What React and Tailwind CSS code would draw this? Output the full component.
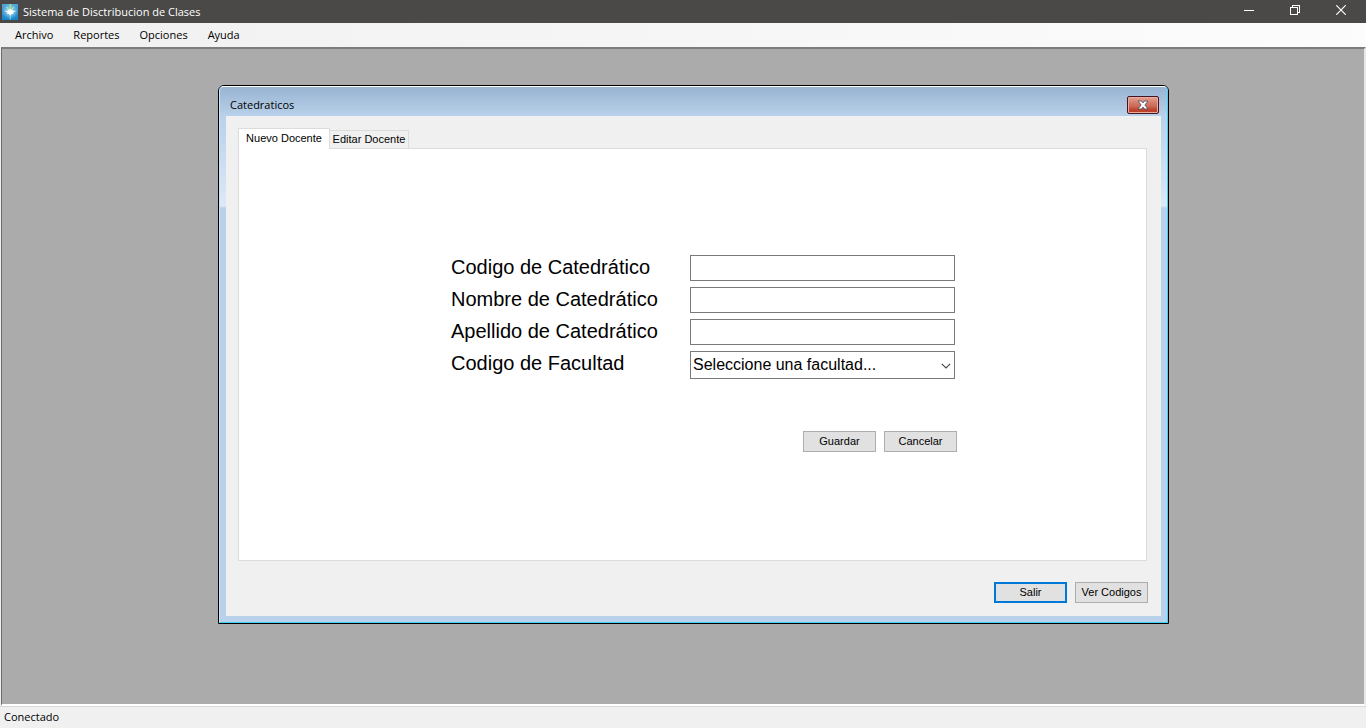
import React, { useState } from "react";

const menuItems = ["Archivo", "Reportes", "Opciones", "Ayuda"];

const fields = [
  { id: "codigo", label: "Codigo de Catedrático" },
  { id: "nombre", label: "Nombre de Catedrático" },
  { id: "apellido", label: "Apellido de Catedrático" },
];

function AppIcon() {
  return (
    <svg width="16" height="16" viewBox="0 0 16 16" aria-hidden="true">
      <defs>
        <linearGradient id="appBg" x1="0" y1="0" x2="0" y2="1">
          <stop offset="0" stopColor="#4fa6d8" />
          <stop offset="1" stopColor="#1583cc" />
        </linearGradient>
        <radialGradient id="appGlow" cx=".5" cy=".45" r=".5">
          <stop offset="0" stopColor="#b4e6f8" />
          <stop offset="1" stopColor="#b4e6f8" stopOpacity="0" />
        </radialGradient>
      </defs>
      <rect width="16" height="16" fill="url(#appBg)" />
      <rect width="16" height="16" fill="url(#appGlow)" />
      <path d="M7.500 0h1.500v6h-1.500z" fill="#a8dc84" />
      <path d="M5 3l2 3M11.500 3l-2 3" stroke="#c4ea9c" />
      <path d="M2.500 7l3.500-.5 2.200-1.500 2.300 1.500 3.500.5-3 1.500.5 1.500h-2l-1.300 2-1.200-2H5l.5-1.500z" fill="#fff" />
      <path d="M7.700 12h1v3.500h-1z" fill="#8fdcc8" />
    </svg>
  );
}

function PushButton({ children, focused = false }) {
  return (
    <button
      type="button"
      className={
        "flex h-[21px] w-[73px] items-center justify-center bg-[#e1e1e1] text-[11px] leading-none whitespace-nowrap text-black " +
        (focused ? "border-2 border-[#0078d7]" : "border border-[#adadad]")
      }
    >
      {children}
    </button>
  );
}

function TitleBar() {
  return (
    <header className="flex h-[23px] shrink-0 items-center justify-between bg-[#4a4947] pr-0.5 pl-0.5 text-white">
      <div className="flex items-center gap-[5px]">
        <AppIcon />
        <h1 className="text-[11px] leading-4">Sistema de Disctribucion de Clases</h1>
      </div>
      <div className="flex h-full">
        <button type="button" aria-label="Minimizar" className="flex w-[46px] items-center justify-center pb-[3px]">
          <svg width="10" height="10" viewBox="0 0 10 10" shapeRendering="crispEdges">
            <path d="M0 5.5h10" stroke="#fff" />
          </svg>
        </button>
        <button type="button" aria-label="Restaurar" className="flex w-[46px] items-center justify-center pb-[3px]">
          <svg width="10" height="10" viewBox="0 0 10 10" fill="none" stroke="#fff" shapeRendering="crispEdges">
            <path d="M.5 2.5h7v7h-7zM2.5 2.5v-2h7v7h-2" />
          </svg>
        </button>
        <button type="button" aria-label="Cerrar" className="flex w-[46px] items-center justify-center pb-[3px]">
          <svg width="10" height="10" viewBox="0 0 10 10" stroke="#fff" strokeWidth="1.2">
            <path d="M.3.3l9.4 9.4M9.7.3L.3 9.7" />
          </svg>
        </button>
      </div>
    </header>
  );
}

function MenuBar() {
  return (
    <nav className="flex h-6 shrink-0 items-center bg-linear-to-r from-[#f0f0f0] to-[#fcfcfc] pl-[9px] text-[11px]">
      {menuItems.map((item) => (
        <button key={item} type="button" className="mr-2 px-1.5 leading-5 text-black">
          {item}
        </button>
      ))}
    </nav>
  );
}

function TeacherForm() {
  return (
    <form className="flex w-[506px] flex-col text-black">
      <div className="flex flex-col gap-1.5">
        {fields.map((f) => (
          <div key={f.id} className="flex">
            <label htmlFor={f.id} className="w-[239px] text-[20px] leading-6">
              {f.label}
            </label>
            <input id={f.id} type="text" className="h-[26px] w-[265px] border border-[#7a7a7a] bg-white px-1 text-[16px] outline-none" />
          </div>
        ))}
        <div className="flex">
          <label htmlFor="facultad" className="w-[239px] text-[20px] leading-6">
            Codigo de Facultad
          </label>
          <div className="relative h-7 w-[265px]">
            <select id="facultad" className="h-full w-full appearance-none border border-[#7a7a7a] bg-white pr-5 pl-[2px] text-[16px] outline-none">
              <option>Seleccione una facultad...</option>
            </select>
            <svg className="pointer-events-none absolute top-3 right-1" width="10" height="6" viewBox="0 0 10 6" fill="none" stroke="#444" strokeWidth="1.1">
              <path d="M.8.8L5 5 9.200.8" />
            </svg>
          </div>
        </div>
      </div>
      <div className="mt-[52px] flex justify-end gap-2">
        <PushButton>Guardar</PushButton>
        <PushButton>Cancelar</PushButton>
      </div>
    </form>
  );
}

function Dialog() {
  const [tab, setTab] = useState("nuevo");
  return (
    <section
      role="dialog"
      aria-labelledby="dialogTitle"
      className="absolute top-9 left-[216px] w-[951px] rounded-t-md border border-black bg-[#b9d1ea]"
    >
      <div className="flex flex-col rounded-t-[5px] border border-t-white border-r-[#43d0f5] border-b-[#43d0f5] border-l-[#c9e4f8]">
        <div className="flex h-[29px] items-center justify-between rounded-t-[4px] bg-linear-to-b from-[#98b4d2] to-[#b9d1ea] pr-2 pl-2.5">
          <h2 id="dialogTitle" className="pt-1.5 font-['Open_Sans','Noto_Sans',sans-serif] text-[11px] leading-4 text-black">
            Catedraticos
          </h2>
          <button
            type="button"
            aria-label="Cerrar ventana"
            className="mt-1.5 flex h-[18px] w-8 items-center justify-center rounded-[2px] border border-[#431422] bg-linear-to-b from-[#e3a193] from-0% via-[#d07260] via-45% to-[#c9604b] to-100% shadow-[inset_0_0_0_1px_#e8aca0,inset_0_-8px_3px_-3px_#bb412b]"
          >
            <svg width="12" height="10" viewBox="0 0 12 10">
              <path d="M1 1h3.400L6 2.900 7.600 1H11L7.900 5 11 9H7.600L6 7.100 4.400 9H1l3.100-4z" fill="#fff" stroke="#535666" strokeWidth=".9" />
            </svg>
          </button>
        </div>
        <div className="bg-linear-to-b from-[#b9d1ea] from-0% via-[#dce9f7] via-[90px] to-[#b9d1ea] to-[92px] px-1.5 pb-1.5">
          <div className="flex flex-col bg-[#f0f0f0] px-3 pt-3">
            <div role="tablist" className="z-10 flex items-end">
              <button
                type="button"
                role="tab"
                aria-selected={tab === "nuevo"}
                onClick={() => setTab("nuevo")}
                className="-mb-px h-[21px] w-[92px] border border-b-0 border-[#dcdcdc] bg-white pb-0.5 text-[11px] leading-none whitespace-nowrap"
              >
                Nuevo Docente
              </button>
              <button
                type="button"
                role="tab"
                aria-selected={tab === "editar"}
                onClick={() => setTab("editar")}
                className="h-[18px] w-[79px] border border-b-0 border-l-0 border-[#dcdcdc] bg-[#f0f0f0] text-[11px] leading-none whitespace-nowrap"
              >
                Editar Docente
              </button>
            </div>
            <div role="tabpanel" className="mr-0.5 border border-[#dcdcdc] bg-white pt-[106px] pb-[108px] pl-[212px]">
              <TeacherForm />
            </div>
            <div className="flex justify-end gap-2 pt-[21px] pr-px pb-[13px]">
              <PushButton focused>Salir</PushButton>
              <PushButton>Ver Codigos</PushButton>
            </div>
          </div>
        </div>
      </div>
    </section>
  );
}

export default function App() {
  return (
    <div className="flex min-h-screen flex-col bg-[#f0f0f0] font-['Open_Sans','Noto_Sans',sans-serif]">
      <TitleBar />
      <MenuBar />
      <main className="relative ml-px flex-1 border-t-2 border-r-2 border-b-2 border-l border-t-[#7c7c7c] border-r-[#e8e8e8] border-b-white border-l-[#696969] bg-[#ababab] font-['Liberation_Sans',Arial,sans-serif]">
        <Dialog />
      </main>
      <footer className="flex h-[22px] shrink-0 items-center border-t border-[#d7d7d7] pl-1 text-[11px] text-black">
        Conectado
      </footer>
    </div>
  );
}
